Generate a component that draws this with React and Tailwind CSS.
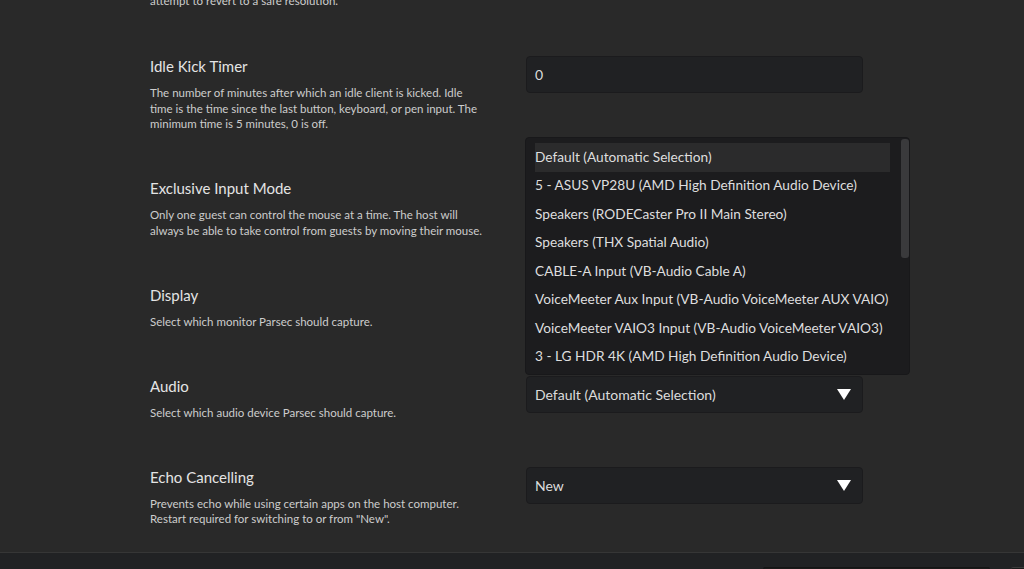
import { useState } from 'react';

const audioDevices = [
  'Default (Automatic Selection)',
  '5 - ASUS VP28U (AMD High Definition Audio Device)',
  'Speakers (RODECaster Pro II Main Stereo)',
  'Speakers (THX Spatial Audio)',
  'CABLE-A Input (VB-Audio Cable A)',
  'VoiceMeeter Aux Input (VB-Audio VoiceMeeter AUX VAIO)',
  'VoiceMeeter VAIO3 Input (VB-Audio VoiceMeeter VAIO3)',
  '3 - LG HDR 4K (AMD High Definition Audio Device)',
];

const Caret = () => (
  <svg width="14" height="11" viewBox="0 0 14 11" className="shrink-0">
    <path d="M0 0 H14 L7 11 Z" fill="#ffffff" />
  </svg>
);

const Select = ({ value, children }) => (
  <div className="relative">
    <div className="h-[37px] w-[337px] rounded-[4px] border border-[#1b1b1d] bg-[#202123] pl-[8px] pr-[11px] flex items-center justify-between text-[14px] text-[#dcdcdc]">
      <span>{value}</span>
      <Caret />
    </div>
    {children}
  </div>
);

const Row = ({ title, lines, control }) => (
  <div className="grid grid-cols-[376px_337px] items-start pb-[46.5px]">
    <div>
      <div className="text-[15px] leading-[20px] text-[#e4e4e4]">{title}</div>
      <div className="mt-[9px] text-[11.5px] leading-[15.5px] text-[#cdcdcd]">
        {lines.map((l) => (
          <div key={l}>{l}</div>
        ))}
      </div>
    </div>
    <div>{control}</div>
  </div>
);

const App = () => {
  const [idle] = useState('0');
  const [selected] = useState(0);

  return (
    <div
      className="h-[569px] w-[1024px] overflow-hidden bg-[#292929] flex flex-col"
      style={{ fontFamily: 'Lato, "Noto Sans", sans-serif' }}
    >
      <div className="flex-1 overflow-hidden pl-[150px]">
        <div className="-mt-[7px] pb-[47.5px] text-[11.5px] leading-[15.5px] text-[#cdcdcd]">
          attempt to revert to a safe resolution.
        </div>

        <Row
          title="Idle Kick Timer"
          lines={[
            'The number of minutes after which an idle client is kicked. Idle',
            'time is the time since the last button, keyboard, or pen input. The',
            'minimum time is 5 minutes, 0 is off.',
          ]}
          control={
            <div className="h-[37px] w-[337px] rounded-[4px] border border-[#1b1b1d] bg-[#202123] pl-[8px] flex items-center text-[14px] text-[#dcdcdc]">
              {idle}
            </div>
          }
        />

        <Row
          title="Exclusive Input Mode"
          lines={[
            'Only one guest can control the mouse at a time. The host will',
            'always be able to take control from guests by moving their mouse.',
          ]}
          control={<Select value="Off" />}
        />

        <Row
          title="Display"
          lines={['Select which monitor Parsec should capture.']}
          control={<Select value="1 - ASUS VP28U" />}
        />

        <Row
          title="Audio"
          lines={['Select which audio device Parsec should capture.']}
          control={
            <Select value="Default (Automatic Selection)">
              {/* open device list, drawn above the select */}
              <div className="absolute left-[-1px] bottom-[38px] z-10 h-[238px] w-[385px] rounded-[4px] border border-[#18181a] bg-[#1c1c1e] flex">
                <div className="w-[355px] ml-[9px] pt-[5.5px]">
                  {audioDevices.map((d, i) => (
                    <div
                      key={d}
                      className={`h-[28.5px] flex items-center text-[13.7px] text-[#dedede] whitespace-nowrap ${
                        i === selected ? 'bg-[#2b2b2c]' : ''
                      }`}
                    >
                      {d}
                    </div>
                  ))}
                </div>
                <div className="ml-[11px] pt-[1px]">
                  <div className="h-[119px] w-[8px] rounded-[3px] bg-[#3a3a3c]" />
                </div>
              </div>
            </Select>
          }
        />

        <Row
          title="Echo Cancelling"
          lines={[
            'Prevents echo while using certain apps on the host computer.',
            'Restart required for switching to or from "New".',
          ]}
          control={<Select value="New" />}
        />
      </div>

      {/* bottom action bar */}
      <div className="h-[17px] shrink-0 border-t border-[#363636] bg-[#212224] flex items-end">
        <div className="ml-[763px] h-[2px] w-[227px] rounded-t-[3px] border-t border-[#151515] bg-[#1a1a1a]" />
        <div className="ml-[21px] h-[2px] flex-1 rounded-tl-[3px] border-t border-[#3a3a3a] bg-[#1a1a1a]" />
      </div>
    </div>
  );
};

export default App;
